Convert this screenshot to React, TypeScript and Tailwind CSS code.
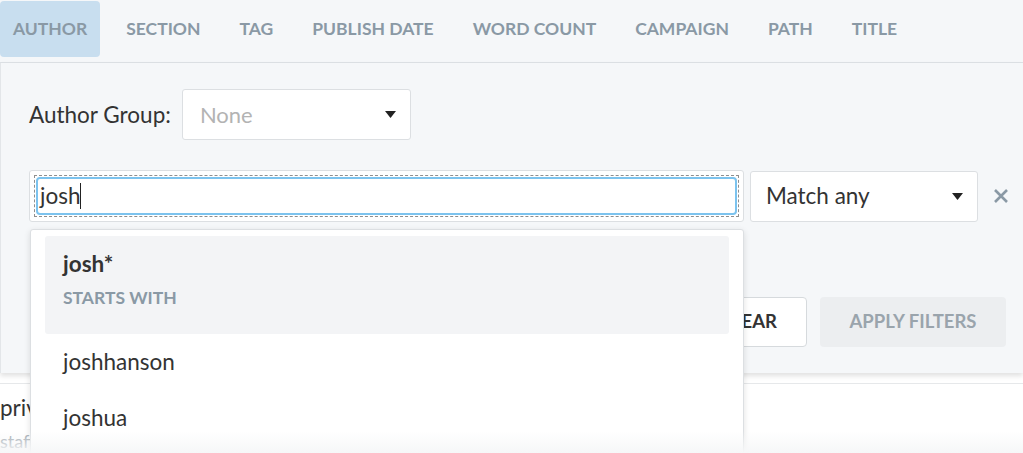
import React from 'react';

const tabs = ['AUTHOR', 'SECTION', 'TAG', 'PUBLISH DATE', 'WORD COUNT', 'CAMPAIGN', 'PATH', 'TITLE'];

function Caret() {
  return (
    <svg width="11" height="7" viewBox="0 0 11 7" className="flex-shrink-0">
      <path d="M0 0 L11 0 L5.5 7 Z" fill="#222" />
    </svg>
  );
}

export default function App() {
  return (
    <div
      className="relative w-[1023px] h-[453px] overflow-hidden bg-white text-[#333]"
      style={{ fontFamily: 'Lato, "Noto Sans", sans-serif' }}
    >
      {/* tab bar */}
      <div className="h-[63px] bg-[#f5f7f9] border-b border-[#dde1e5] flex items-start gap-[13px]">
        {tabs.map((t, i) => (
          <div
            key={t}
            className={`mt-[1px] h-[56px] px-[13px] flex items-center rounded-[4px] text-[17.5px] font-bold text-[#8a99a5] ${
              i === 0 ? 'bg-[#c8deef]' : ''
            }`}
          >
            {t}
          </div>
        ))}
      </div>

      {/* filter panel */}
      <div className="h-[310px] bg-[#f5f7f9] shadow-[0_3px_5px_rgba(0,0,0,0.12)] border-l border-[#e3e6e9] pl-[28px] pr-[17px] pt-[26px] flex flex-col">
        <div className="flex items-center gap-[11px]">
          <span className="text-[22.5px] text-[#333]">Author Group:</span>
          <div className="w-[229px] h-[51px] bg-white border border-[#dcdfe2] rounded-[3px] flex items-center justify-between pl-[17px] pr-[14px]">
            <span className="text-[22px] text-[#b3b3b3]">None</span>
            <Caret />
          </div>
        </div>

        <div className="mt-[30px] flex items-center">
          <div className="flex-shrink-0 w-[715px] h-[52px] bg-white border border-[#dcdfe2] rounded-[3px] p-[4px]">
            <div className="h-full border border-dashed border-[#8f8f8f] p-[1px]">
              <div className="h-full border-2 border-[#7cc3ee] rounded-[4px] flex items-center pl-[2px]">
                <span className="text-[22.5px] text-[#333]">josh</span>
                <span className="w-[1px] h-[26px] bg-[#222]" />
              </div>
            </div>
          </div>
          <div className="flex-shrink-0 ml-[6px] w-[228px] h-[51px] bg-white border border-[#dcdfe2] rounded-[3px] flex items-center justify-between pl-[15px] pr-[14px]">
            <span className="text-[22.5px] text-[#333]">Match any</span>
            <Caret />
          </div>
          <svg width="16" height="16" viewBox="0 0 16 16" className="flex-shrink-0 ml-[15px]">
            <path d="M2 2 L14 14 M14 2 L2 14" stroke="#8a99a5" strokeWidth="2.6" />
          </svg>
        </div>

        <div className="mt-[75px] flex justify-end gap-[13px]">
          <div className="h-[50px] px-[29px] bg-white border border-[#d6dadd] rounded-[4px] flex items-center text-[18.5px] font-bold text-[#333]">
            CLEAR
          </div>
          <div className="w-[186px] h-[50px] bg-[#eceef0] rounded-[4px] flex items-center justify-center text-[18.5px] font-bold text-[#9aa4ac]">
            APPLY FILTERS
          </div>
        </div>
      </div>

      {/* content under panel */}
      <div className="mt-[10px] border-t border-[#e6e8ea]">
        <div className="pt-[10px] text-[22.5px] text-[#333] leading-[28px]">private</div>
        <div className="pt-[6px] text-[18px] text-[#9aa4ac]">staff</div>
      </div>

      {/* autocomplete dropdown */}
      <div className="absolute left-[30px] top-[229px] w-[714px] h-[240px] bg-white border border-[#dcdfe2] rounded-[3px] shadow-[0_2px_6px_rgba(0,0,0,0.12)] px-[14px] pt-[6px]">
        <div className="h-[98px] bg-[#f3f4f6] rounded-[3px] pl-[18px] pt-[13px] flex flex-col">
          <span className="text-[22.5px] font-bold text-[#333] leading-[30px]">josh*</span>
          <span className="mt-[6px] text-[17.5px] font-bold text-[#8a99a5]">STARTS WITH</span>
        </div>
        <div className="pl-[18px] h-[56px] flex items-center text-[22.5px] text-[#333]">joshhanson</div>
        <div className="pl-[18px] h-[56px] flex items-center text-[22.5px] text-[#333]">joshua</div>
      </div>

      {/* bottom fade */}
      <div className="absolute left-0 right-0 bottom-0 h-[22px] bg-gradient-to-b from-transparent to-[#f6f7f8] pointer-events-none" />
    </div>
  );
}
